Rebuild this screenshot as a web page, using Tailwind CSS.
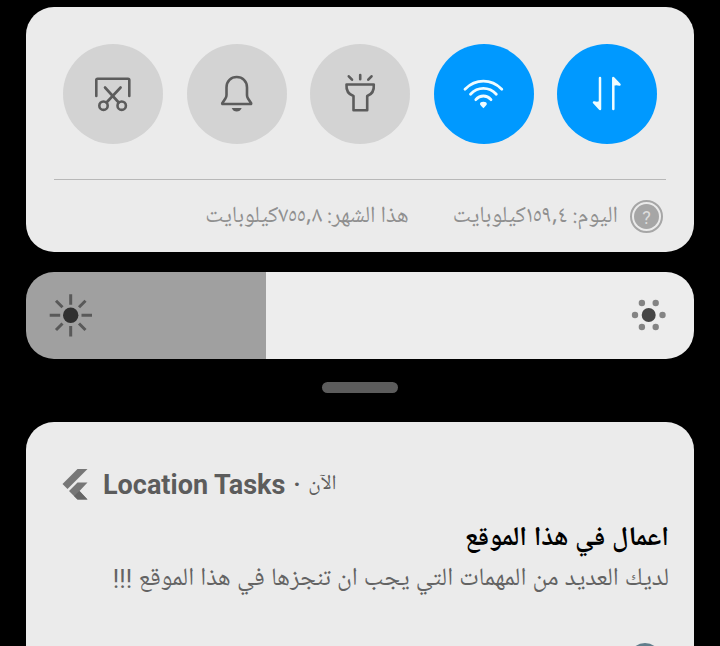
<!DOCTYPE html>
<html lang="ar">
<head>
<meta charset="utf-8">
<meta name="viewport" content="width=device-width, initial-scale=1">
<title>Location Tasks</title>
<script src="https://cdn.jsdelivr.net/npm/@tailwindcss/browser@4"></script>
</head>
<body class="bg-black">
<main class="flex h-screen flex-col overflow-hidden px-[26px] pt-[7px] font-['Roboto','Noto_Naskh_Arabic_UI','Noto_Naskh_Arabic','DejaVu_Sans',sans-serif]">

  <section class="rounded-[28px] bg-[#ebebeb] px-7 pt-[37px]">
    <div class="flex justify-between px-[9px]">
      <button type="button" aria-label="Screenshot" class="grid size-[100px] place-items-center rounded-full bg-[#d3d3d3] text-[#5c5c5c]">
        <svg class="size-12" viewBox="0 0 48 48" fill="none" stroke="currentColor" stroke-width="2.6" stroke-linecap="round" stroke-linejoin="round"><path d="M7.300 26V10q0-1.300 1.300-1.300H39q1.300 0 1.300 1.300V26M16 17.500L29.700 32.500M31.600 17.500L17.500 32.500"/><circle cx="14.500" cy="35.700" r="4.200"/><circle cx="32.700" cy="35.700" r="4.200"/></svg>
      </button>
      <button type="button" aria-label="Sound" class="grid size-[100px] place-items-center rounded-full bg-[#d3d3d3] text-[#5c5c5c]">
        <svg class="size-12" viewBox="0 0 48 48" fill="none" stroke="currentColor" stroke-width="2.600" stroke-linecap="round" stroke-linejoin="round"><path d="M13.500 17.500C13.500 11 18 7 23.700 7S34 11 34 17.500V25q0 2 1 3.500l3 4.500q.6 1-.6 1H10q-1.200 0-.6-1l3-4.500q1.100-1.500 1.100-3.500z"/><path d="M18.700 38h10q-1.500 3.500-5 3.500t-5-3.500z" fill="currentColor" stroke="none"/></svg>
      </button>
      <button type="button" aria-label="Flashlight" class="grid size-[100px] place-items-center rounded-full bg-[#d3d3d3] text-[#5c5c5c]">
        <svg class="size-12" viewBox="0 0 48 48" fill="none" stroke="currentColor" stroke-width="2.600" stroke-linecap="round" stroke-linejoin="round"><path d="M10.500 14.500H37.800Q38.500 23.500 31.200 26V40.300H17.500V26Q9.800 23.500 10.500 14.500zM24.200 5V9.300M12.800 6.300l3.200 3.400M35.500 6.300l-3.200 3.400"/></svg>
      </button>
      <button type="button" aria-label="Wi-Fi" class="grid size-[100px] place-items-center rounded-full bg-[#0099ff] text-[#effcff]">
        <svg class="size-12" viewBox="0 0 48 48" fill="none" stroke="currentColor" stroke-width="2.800" stroke-linecap="round"><path d="M5 19.200Q13 11.200 23.400 11.200T41.800 19.200M10.500 24.200Q16 18.300 23.400 18.300T36.300 24.200M15.800 29.700Q19 26 23.400 26T31 29.700"/><path d="M20 34q0-2.300 3.400-2.300T26.800 34q0 1-3.400 4.300Q20 35 20 34z" fill="currentColor" stroke="none"/></svg>
      </button>
      <button type="button" aria-label="Mobile data" class="grid size-[100px] place-items-center rounded-full bg-[#0099ff] text-[#effcff]">
        <svg class="size-12" viewBox="0 0 48 48" fill="currentColor" stroke="currentColor" stroke-width="2.500" stroke-linecap="round" stroke-linejoin="round"><path d="M17 8V39L11 32.500Q15 33.500 17 32zM30.300 39V8L36.500 14.500Q32.300 13.500 30.300 15z"/></svg>
      </button>
    </div>
    <div dir="rtl" class="mt-[35px] flex h-[73px] items-center border-t border-[#b8b8b8] pr-[3px] text-[23px] leading-8 text-[#8f8f8f]">
      <button type="button" aria-label="Help" class="grid size-[33px] shrink-0 place-items-center rounded-full border-2 border-[#a6a6a6]">
        <span class="grid size-[25px] place-items-center rounded-full bg-[#a6a6a6] text-lg text-[#dedede]">?</span>
      </button>
      <p class="mr-3 font-['Noto_Naskh_Arabic_UI','Noto_Naskh_Arabic','Roboto',sans-serif] whitespace-nowrap">اليوم: ١٥٩,٤كيلوبايت</p>
      <p class="mr-11 font-['Noto_Naskh_Arabic_UI','Noto_Naskh_Arabic','Roboto',sans-serif] whitespace-nowrap">هذا الشهر: ٧٥٥,٨كيلوبايت</p>
    </div>
  </section>

  <div class="relative mt-5 shrink-0">
    <input type="range" min="0" max="100" value="36" aria-label="Brightness" class="block h-[87px] w-full appearance-none rounded-[28px] bg-[linear-gradient(to_right,#a0a0a0_36%,#ededed_36%)] [&::-webkit-slider-thumb]:size-0 [&::-webkit-slider-thumb]:appearance-none">
    <div class="pointer-events-none absolute inset-0 flex items-center justify-between px-[21px]">
      <svg class="size-12" viewBox="0 0 48 48" fill="none" stroke="#595959" stroke-width="3"><path d="M23.700 2.300V12.800M23.700 34v10.500M2.700 23.300H13.200M34.500 23.300H45M9 8.700l6.500 6.500M32 31.500l6.500 6.500M38.500 8.700l-6.500 6.500M15.500 31.500l-6.500 6.500"/><circle cx="23.700" cy="23.300" r="7.700" fill="#303030" stroke="none"/></svg>
      <svg class="size-12" viewBox="0 0 48 48" fill="#848484"><circle cx="23.700" cy="23" r="7" fill="#464646"/><circle cx="10" cy="23" r="3.200"/><circle cx="37.500" cy="23" r="3.200"/><circle cx="16.900" cy="11" r="3.200"/><circle cx="30.700" cy="11" r="3.200"/><circle cx="16.900" cy="35" r="3.200"/><circle cx="30.700" cy="35" r="3.200"/></svg>
    </div>
  </div>

  <div class="mx-auto mt-[23px] h-[11px] w-[76px] shrink-0 rounded-full bg-[#5c5c5c]"></div>

  <article class="mt-[29px] flex-1 rounded-t-[28px] bg-[#ebebeb] px-[25px] pt-[45px]">
    <header class="flex h-9 items-center pl-[11px] text-[#5c5c5c]">
      <svg class="h-8 w-[26px]" viewBox="0 0 26 32"><path d="M15.500 0H25.500L5.500 20L.5 15z" fill="#777"/><path d="M15.500 13.500H25.500L17.500 22L25.500 30.500H15.500L7 22z" fill="#777"/><path d="M12 27l5.500-5 8 8.500h-10z" fill="#666"/></svg>
      <h1 class="ml-[15px] text-[27px] font-bold">Location Tasks</h1>
      <span class="mx-2 text-[23px] font-bold">·</span>
      <time dir="rtl" class="text-[21px] leading-8">الآن</time>
    </header>
    <div dir="rtl">
      <h2 class="mt-[17px] h-10 text-[27px] leading-10 font-bold text-black">اعمال في هذا الموقع</h2>
      <p class="h-10 text-[25px] leading-10 whitespace-nowrap text-[#636363]">لديك العديد من المهمات التي يجب ان تنجزها في هذا الموقع !!!</p>
      <button type="button" aria-label="Expand" class="mt-[43px] mr-2 block size-8 rounded-full bg-[#607d8b]"></button>
    </div>
  </article>
</main>
</body>
</html>
